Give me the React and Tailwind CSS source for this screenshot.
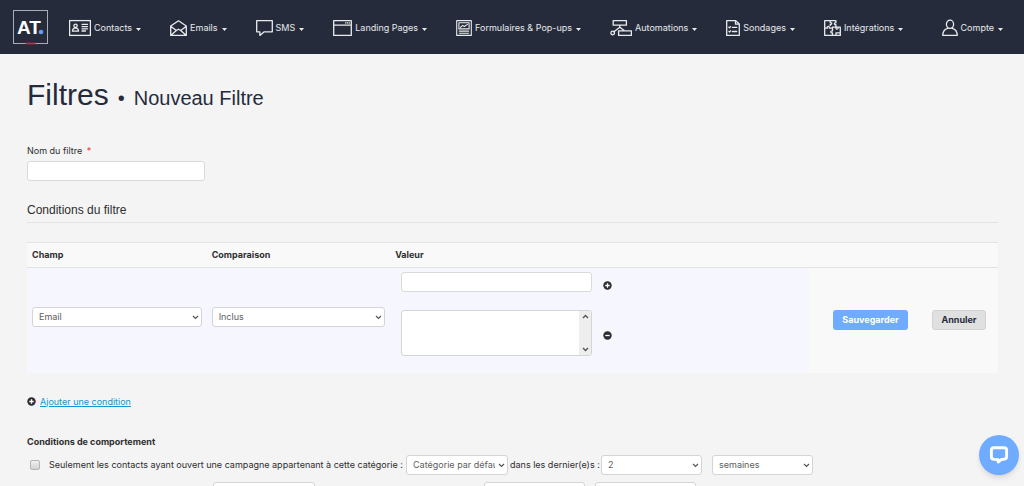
import React from "react";

const stroke = {
  fill: "none",
  stroke: "currentColor",
  strokeWidth: 1.3,
  strokeLinejoin: "round",
  strokeLinecap: "round",
};

const icons = {
  contacts: (
    <svg width="22" height="18" viewBox="0 0 22 18" {...stroke} aria-hidden="true">
      <rect x="0.6" y="1.6" width="20.8" height="14.8" strokeLinejoin="miter" />
      <circle cx="6.5" cy="6.8" r="1.7" />
      <path d="M3.5 12.2c0-2 1-2.8 2.2-3h1.6c1.2.2 2.2 1 2.2 3zM13 5.4h5.5M13 7.6h5.5M13 9.8h5.5M13 12h3.5" />
    </svg>
  ),
  emails: (
    <svg width="17" height="18" viewBox="0 0 17 18" {...stroke} aria-hidden="true">
      <path d="M.7 7 8.5 1.8 16.3 7v9.4H.7zM.7 7.2l5.6 4.3M16.3 7.2l-5.6 4.3M.7 16.4l5.6-4.9 2.2-1.3 2.2 1.3 5.6 4.9" />
    </svg>
  ),
  sms: (
    <svg width="17" height="18" viewBox="0 0 17 18" {...stroke} aria-hidden="true">
      <path d="M.7 1.6h15.6v11.2H8.2l-4.3 3.6v-3.6H.7z" />
    </svg>
  ),
  landing: (
    <svg width="19" height="18" viewBox="0 0 19 18" {...stroke} aria-hidden="true">
      <path d="M.7 1.6h17.6v14.8H.7zM.7 6.1h17.6M12.6 3.9h.3M14.4 3.9h.3M16.2 3.9h.3" />
    </svg>
  ),
  forms: (
    <svg width="16" height="18" viewBox="0 0 16 18" {...stroke} strokeWidth="1.1" aria-hidden="true">
      <path d="M.7 1.6h14.6v14.8H.7zM2.9 3.8h10.2v6.1H2.9zM3.3 12.1h9.4M3.3 14.2h9.4M4.5 8.4l2.2-2 1.6 1.1 3.2-2.1" />
    </svg>
  ),
  automations: (
    <svg width="22" height="18" viewBox="0 0 22 18" {...stroke} aria-hidden="true">
      <path d="M3.2 1.6h13.2v4.6H3.2zM8.6 11.8h12.8v4.6H8.6zM9.8 6.2v2.4M9.8 8.2 3.9 12.8M9.8 8.2l4.7 3.6" />
      <circle cx="2.7" cy="14" r="1.8" />
    </svg>
  ),
  sondages: (
    <svg width="14" height="18" viewBox="0 0 14 18" {...stroke} aria-hidden="true">
      <path d="M.7 1.6h9l3.6 3.4v11.4H.7zM9.5 1.8V5.2h3.600M2.900 8.200l.6.6 1-1.200M6.300 8.300h4.400M2.900 12.400l.6.6 1-1.200M6.300 12.500h4.400" />
    </svg>
  ),
  integrations: (
    <svg width="17" height="18" viewBox="0 0 17 18" {...stroke} aria-hidden="true">
      <path d="M.7 1.600h11.200v2.200c-2-.6-2 2.400 0 1.800v2.500h4.400v8.300H.7zM.7 9.200h2.600c-.9-2.500 2.800-2.500 2 0h3.200M8.500 16.300v-2.500c-2.200.7-2.200-2.500 0-1.800V8.100h3.400M6.200 1.700v2c2-.6 2 2.200 0 1.800v1M12 8.300c-.7 2.400 2.600 2.400 2 0M12 16v-2.200h4" />
    </svg>
  ),
  compte: (
    <svg width="16" height="18" viewBox="0 0 16 18" {...stroke} aria-hidden="true">
      <ellipse cx="8" cy="5.300" rx="3.600" ry="4.100" />
      <path d="M5.800 9.300C2.400 10.100.8 11.800.8 16.400h14.400c0-4.600-1.600-6.300-5-7.100" />
    </svg>
  ),
};

const menu = [
  ["contacts", "Contacts"],
  ["emails", "Emails"],
  ["sms", "SMS"],
  ["landing", "Landing Pages"],
  ["forms", "Formulaires & Pop-ups"],
  ["automations", "Automations"],
  ["sondages", "Sondages"],
  ["integrations", "Intégrations"],
];

function MenuButton({ icon, label }) {
  return (
    <button type="button" className="flex shrink-0 items-center gap-[2px] whitespace-nowrap text-white/90">
      {icons[icon]}
      <span className="ml-px">{label}</span>
      <svg className="ml-[2px] mt-[2px]" width="5" height="3" viewBox="0 0 5 3" aria-hidden="true">
        <path d="M0 0h5L2.500 3z" fill="currentColor" />
      </svg>
    </button>
  );
}

function Select({ label, options, className }) {
  return (
    <span className={"relative block h-5 shrink-0 " + className}>
      <select
        aria-label={label}
        className="block h-5 w-full appearance-none rounded-[3px] border border-[#d4d4d6] bg-white pl-[6px] pr-3 text-[#606060]"
      >
        {options.map((o) => (
          <option key={o}>{o}</option>
        ))}
      </select>
      <svg
        className="pointer-events-none absolute right-[3px] top-2"
        width="7"
        height="5"
        viewBox="0 0 7 5"
        fill="none"
        stroke="#555"
        strokeWidth="1.200"
        aria-hidden="true"
      >
        <path d="M1 1l2.500 2.500L6 1" />
      </svg>
    </span>
  );
}

function RoundIcon({ minus }) {
  return (
    <svg width="9" height="9" viewBox="0 0 9 9" aria-hidden="true">
      <circle cx="4.500" cy="4.500" r="4.200" fill="#2e2e2e" />
      <path d={minus ? "M2.300 4.500h4.400" : "M2.300 4.500h4.400M4.500 2.300v4.400"} stroke="#fff" strokeWidth="1.300" />
    </svg>
  );
}

export default function App() {
  return (
    <div className="h-screen overflow-hidden bg-[#f4f4f4] font-[Inter,'Liberation_Sans',sans-serif] text-[9px] leading-4 text-[#2e2e2e]">
      <header className="flex h-[54px] items-center bg-[#252b3b] pl-[13px] pr-[21px]">
        <a href="#accueil" aria-label="AT." className="mr-[21px] shrink-0">
          <svg width="35" height="35" viewBox="0 0 35 35" aria-hidden="true">
            <rect x="0.500" y="0.500" width="34" height="33" fill="none" stroke="#a9acb4" />
            <path d="M12.500 33.500h10" stroke="#c22f50" strokeWidth="1.600" />
            <text
              x="4"
              y="24"
              fill="#fff"
              fontSize="19"
              fontWeight="700"
              fontFamily="'Liberation Sans',sans-serif"
            >
              AT
            </text>
            <circle cx="28" cy="22" r="2.300" fill="#5b9ff5" />
          </svg>
        </a>
        <nav className="mt-[2px] flex grow items-center justify-between">
          <div className="flex items-center gap-[29px]">
            {menu.map(([icon, label]) => (
              <MenuButton key={icon} icon={icon} label={label} />
            ))}
          </div>
          <MenuButton icon="compte" label="Compte" />
        </nav>
      </header>

      <main className="pl-[27px] pr-[26px] pt-[23px]">
        <h1 className="flex items-baseline gap-[9px] font-['Liberation_Sans',Arial,sans-serif] text-[30px] leading-9 text-[#252b3b]">
          Filtres
          <span className="text-[20px]">•</span>
          <small className="text-[20px]">Nouveau Filtre</small>
        </h1>

        <label htmlFor="nom" className="mt-[27px] block">
          Nom du filtre <span className="ml-[2px] text-[#f22]">*</span>
        </label>
        <input
          id="nom"
          type="text"
          className="mt-[2px] block h-5 w-[178px] rounded-[3px] border border-[#dadada] bg-white px-[6px]"
        />

        <h2 className="mt-[21px] border-b border-[#e3e3e5] pb-1 font-['Liberation_Sans',Arial,sans-serif] text-[12px] leading-4">
          Conditions du filtre
        </h2>

        <table className="mt-[19px] w-full table-fixed border-collapse bg-[#f9f9f9] text-left">
          <colgroup>
            <col className="w-[18.500%]" />
            <col className="w-[18.900%]" />
            <col className="w-[43.100%]" />
            <col />
          </colgroup>
          <thead>
            <tr className="h-[25px] border-y border-[#e3e3e5]">
              <th scope="col" className="px-[5px]">Champ</th>
              <th scope="col" className="px-[5px]">Comparaison</th>
              <th scope="col" className="px-[5px]">Valeur</th>
              <td />
            </tr>
          </thead>
          <tbody>
            <tr className="h-[105px]">
              <td className="bg-[#f6f7fe] px-[5px] pb-[6px]">
                <Select label="Champ" options={["Email"]} className="w-full" />
              </td>
              <td className="bg-[#f6f7fe] px-[5px] pb-[6px]">
                <Select label="Comparaison" options={["Inclus"]} className="w-full" />
              </td>
              <td className="bg-[#f6f7fe] pl-[11px] align-top">
                <div className="flex items-end gap-[11px] pt-1">
                  <input
                    type="text"
                    aria-label="Valeur"
                    className="h-5 w-[191px] rounded-[3px] border border-[#dadada] bg-white px-[6px]"
                  />
                  <button type="button" aria-label="Ajouter" className="pb-[2px]">
                    <RoundIcon />
                  </button>
                </div>
                <div className="mt-[18px] flex items-center gap-[11px]">
                  <div className="flex h-[46px] w-[191px] overflow-hidden rounded-[3px] border border-[#d4d4d6] bg-white">
                    <textarea aria-label="Valeurs" className="block h-full grow resize-none overflow-hidden p-1" />
                    <div className="flex w-3 shrink-0 flex-col items-center justify-between bg-[#eee] py-[3px] text-[#555]">
                      <svg width="7" height="5" viewBox="0 0 7 5" fill="none" stroke="currentColor" strokeWidth="1.400" aria-hidden="true">
                        <path d="M1 4l2.500-2.500L6 4" />
                      </svg>
                      <svg width="7" height="5" viewBox="0 0 7 5" fill="none" stroke="currentColor" strokeWidth="1.400" aria-hidden="true">
                        <path d="M1 1l2.500 2.500L6 1" />
                      </svg>
                    </div>
                  </div>
                  <button type="button" aria-label="Retirer" className="pt-1">
                    <RoundIcon minus />
                  </button>
                </div>
              </td>
              <td className="pr-3">
                <div className="flex justify-end gap-6">
                  <button type="button" className="h-5 w-[75px] rounded-[3px] bg-[#6fabff] font-bold text-white">
                    Sauvegarder
                  </button>
                  <button type="button" className="h-5 w-[54px] rounded-[3px] border border-[#d2d2d2] bg-[#e0e0e0] font-bold text-[#252b3b]">
                    Annuler
                  </button>
                </div>
              </td>
            </tr>
          </tbody>
        </table>

        <div className="mt-[21px] flex items-center gap-1">
          <RoundIcon />
          <a href="#condition" className="text-[#1593d2] underline">Ajouter une condition</a>
        </div>

        <h3 className="mt-6 font-bold">Conditions de comportement</h3>
        <div className="mt-[5px] flex items-center">
          <input
            id="ouvert"
            type="checkbox"
            className="ml-[3px] mr-[9px] size-[10px] shrink-0 appearance-none rounded-[2px] border border-[#b5b5b5] bg-linear-to-b from-[#f0f0f0] to-[#d2d2d2]"
          />
          <label htmlFor="ouvert" className="w-[357px] shrink-0 whitespace-nowrap">
            Seulement les contacts ayant ouvert une campagne appartenant à cette catégorie :
          </label>
          <Select label="Catégorie" options={["Catégorie par défaut"]} className="w-[102px]" />
          <span className="w-[93px] shrink-0 whitespace-nowrap pl-[2px]">dans les dernier(e)s :</span>
          <Select label="Nombre" options={["2"]} className="w-[101px]" />
          <Select label="Unité" options={["semaines"]} className="ml-[10px] w-[101px]" />
        </div>
        <div className="mt-[7px] flex pl-[186px]">
          <Select label="Campagne" options={["Toutes"]} className="w-[102px]" />
          <Select label="Nombre de périodes" options={["2"]} className="ml-[169px] w-[101px]" />
          <Select label="Unité de période" options={["semaines"]} className="ml-[10px] w-[101px]" />
        </div>
      </main>

      <button
        type="button"
        aria-label="Chat"
        className="fixed bottom-[11px] right-[5px] flex size-10 items-center justify-center rounded-full bg-[#6fabff] shadow-md"
      >
        <svg width="20" height="20" viewBox="0 0 20 20" fill="none" stroke="#fff" strokeWidth="2.900" strokeLinejoin="round" aria-hidden="true">
          <path d="M5 2.800h10q2.600 0 2.600 2.600v6.400q0 2.200-2.600 2.400l-2.400.2-3.400 2.600v-2.400L5 14.400q-2.600-.2-2.600-2.600V5.400Q2.400 2.800 5 2.800z" />
        </svg>
      </button>
    </div>
  );
}
